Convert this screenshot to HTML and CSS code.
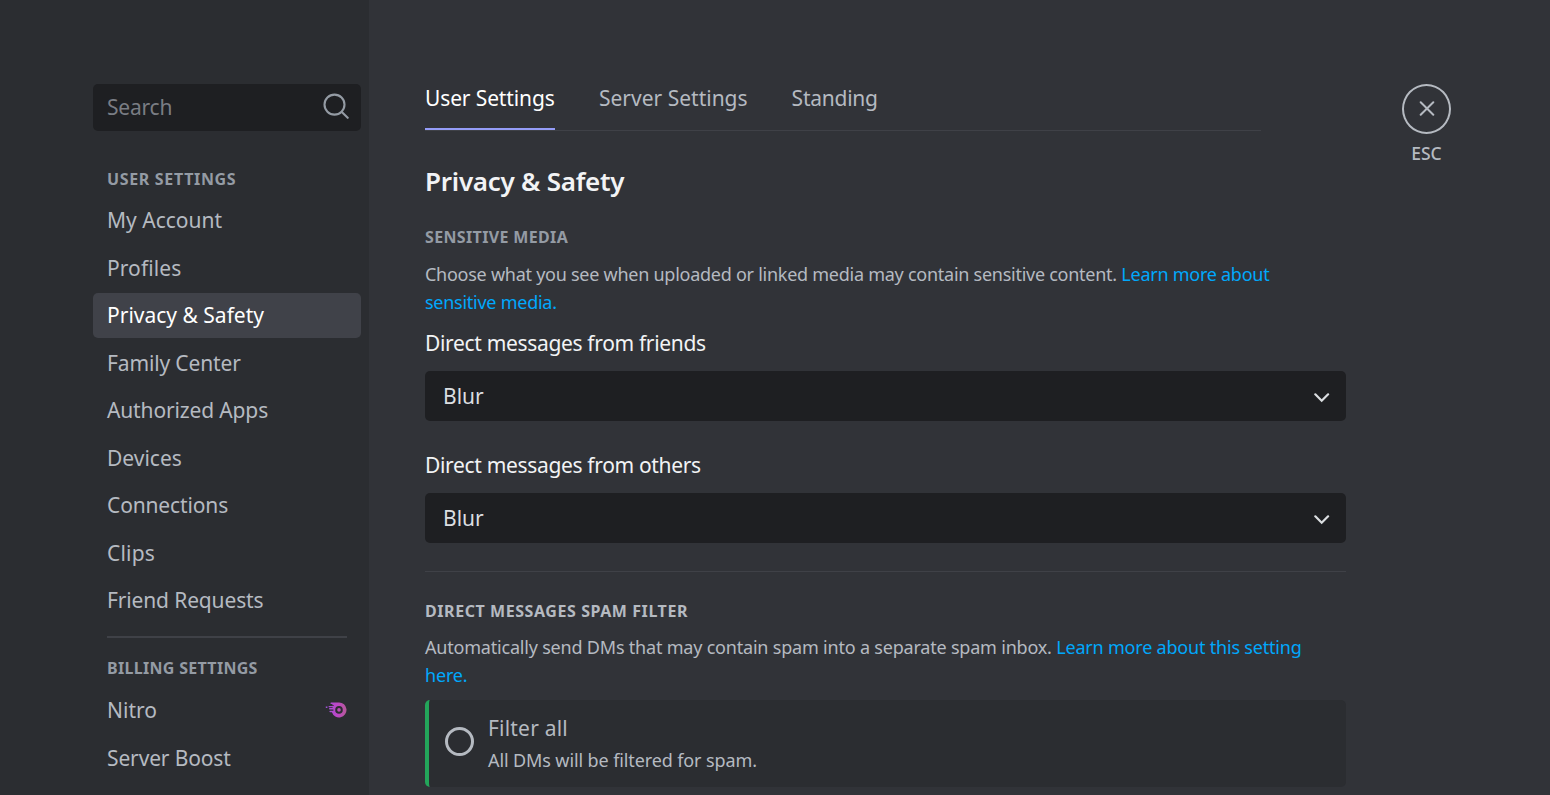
FILE: index.html
```html
<!DOCTYPE html>
<html lang="en">
<head>
<meta charset="utf-8">
<title>Privacy &amp; Safety</title>
<link rel="stylesheet" href="styles.css">
</head>
<body>
<div class="app">
  <nav class="sidebar">
    <div class="search">
      <span class="search-text">Search</span>
      <svg class="search-icon" width="26" height="26" viewBox="0 0 26 26" fill="none" stroke="#949ba4" stroke-width="2.1" stroke-linecap="round"><circle cx="11.5" cy="11.6" r="10"/><path d="M18.8 18.9L24.7 24.8"/></svg>
    </div>
    <h2 class="nav-heading nh-user">User Settings</h2>
    <ul class="nav-list">
      <li class="item"><span>My Account</span></li>
      <li class="item"><span class="i-profiles">Profiles</span></li>
      <li class="item active"><span>Privacy &amp; Safety</span></li>
      <li class="item"><span class="tight">Family Center</span></li>
      <li class="item"><span class="tight">Authorized Apps</span></li>
      <li class="item"><span>Devices</span></li>
      <li class="item"><span class="tight">Connections</span></li>
      <li class="item"><span class="i-clips">Clips</span></li>
      <li class="item"><span class="tight">Friend Requests</span></li>
    </ul>
    <hr class="nav-rule">
    <h2 class="nav-heading nh-billing">Billing Settings</h2>
    <ul class="nav-list">
      <li class="item"><span>Nitro</span>
        <svg class="nitro" width="22" height="16" viewBox="0 0 22 16"><defs><linearGradient id="ng" x1="0" y1="0" x2="1" y2="0"><stop offset="0" stop-color="#9c52d6"/><stop offset=".55" stop-color="#bd46c8"/><stop offset="1" stop-color="#b55a96"/></linearGradient></defs><path fill="url(#ng)" fill-rule="evenodd" d="M6.2.4H14A7.5 7.5 0 1 1 6.9 10.3H5.2Q4.4 10.2 4.4 9.5T5.2 8.7H8.4V7.6H4.8Q4 7.5 4 6.8T4.8 6H7.6V5.3H4.2Q3.5 5.2 3.5 4.6T4.2 3.9H8.8V3.2H7.4V2H6.2Q5.4 1.9 5.4 1.2T6.2.4ZM14 4.1a3.8 3.8 0 1 0 0 7.6a3.8 3.8 0 1 0 0-7.6ZM.8 4.4H2.4V6H.8Z"/><circle cx="14" cy="7.9" r="1.8" fill="#bd4cb9"/></svg>
      </li>
      <li class="item"><span class="tight">Server Boost</span></li>
    </ul>
  </nav>
  <main class="content">
    <div class="tabs">
      <div class="tab selected">User Settings</div>
      <div class="tab">Server Settings</div>
      <div class="tab t-standing">Standing</div>
    </div>
    <h1 class="title">Privacy &amp; Safety</h1>
    <h2 class="section-heading muted">Sensitive Media</h2>
    <p class="desc d-media">Choose what you see when uploaded or linked media may contain sensitive content. <a>Learn more about<br>sensitive media.</a></p>
    <h3 class="label l-friends">Direct messages from friends</h3>
    <div class="select"><span>Blur</span><svg width="16" height="10" viewBox="0 0 16 10" fill="none" stroke="#dbdee1" stroke-width="2.2" stroke-linecap="round"><path d="M1.3 1.3L7.7 7.8L14.1 1.3"/></svg></div>
    <h3 class="label l-others">Direct messages from others</h3>
    <div class="select"><span>Blur</span><svg width="16" height="10" viewBox="0 0 16 10" fill="none" stroke="#dbdee1" stroke-width="2.2" stroke-linecap="round"><path d="M1.3 1.3L7.7 7.8L14.1 1.3"/></svg></div>
    <hr class="rule">
    <h2 class="section-heading spam">Direct Messages Spam Filter</h2>
    <p class="desc d-spam">Automatically send DMs that may contain spam into a separate spam inbox. <a>Learn more about this setting<br>here.</a></p>
    <div class="option">
      <span class="radio"></span>
      <div class="option-text">
        <div class="option-title">Filter all</div>
        <div class="option-desc">All DMs will be filtered for spam.</div>
      </div>
    </div>
  </main>
  <aside class="close">
    <div class="close-ring"><svg width="16" height="16" viewBox="0 0 16 16" stroke="#b5bac1" stroke-width="2" stroke-linecap="round"><path d="M1.7 1.2L14.3 13.8M14.3 1.2L1.7 13.8"/></svg></div>
    <div class="esc">ESC</div>
  </aside>
</div>
</body>
</html>
```
FILE: styles.css
```css
* { box-sizing: border-box; }
body { margin: 0; background: #313338; font-family: "Noto Sans", "Open Sans", sans-serif; color: #b5bac1; }
h1, h2, h3, p, ul { margin: 0; padding: 0; font-weight: 400; }
ul { list-style: none; }
hr { border: 0; margin: 0; }
.app { display: flex; width: 1550px; height: 795px; overflow: hidden; white-space: nowrap; }
.sidebar { width: 369px; flex: none; padding: 84px 8px 0 93px; background: #2b2d31; }
.search { display: flex; align-items: center; justify-content: space-between; height: 47px; padding: 0 12px 0 14px; border-radius: 5px; background: #1e1f22; }
.search-text { margin-top: -1px; font-size: 21px; color: #7a7d84; letter-spacing: -.2px; }
.search-icon { margin-top: -3px; }
.nav-heading { height: 22px; margin-left: 14px; font-size: 16px; line-height: 22px; font-weight: 700; text-transform: uppercase; color: #949ba4; }
.nh-user { margin-top: 37px; margin-bottom: 7.5px; letter-spacing: .66px; }
.nh-billing { margin-top: 19px; margin-bottom: 9px; letter-spacing: .3px; }
.nav-list { display: flex; flex-direction: column; gap: 2.5px; }
.item { display: flex; align-items: center; justify-content: space-between; height: 45px; padding: 0 14px; border-radius: 5px; font-size: 21px; line-height: 28px; }
.item span { margin-top: -1px; }
.item:nth-child(even) span { margin-top: 0; }
.tight { letter-spacing: -.14px; }
.i-profiles { letter-spacing: .08px; }
.i-clips { letter-spacing: .2px; }
.item.active { background: #404249; color: #fff; }
.nav-rule { height: 2px; margin: 13px 14px 0; background: #3f4147; }
.content { width: 921px; flex: none; margin-left: 56px; padding-top: 84px; }
.tabs { display: flex; gap: 44px; width: 836px; height: 47px; border-bottom: 1px solid #3f4147; }
.tab { height: 46px; font-size: 21px; line-height: 29px; }
.tab.selected { width: 130px; color: #fff; border-bottom: 2px solid #949cf7; letter-spacing: -.13px; }
.t-standing { letter-spacing: -.25px; }
.title { height: 34px; margin-top: 33px; font-size: 26px; line-height: 34px; font-weight: 600; letter-spacing: -.25px; color: #f2f3f5; }
.section-heading { height: 22px; font-size: 16px; line-height: 22px; font-weight: 700; text-transform: uppercase; letter-spacing: .35px; }
.muted { margin-top: 28px; color: #949ba4; }
.desc { font-size: 18px; line-height: 28px; }
.d-media { margin-top: 12px; letter-spacing: -.26px; }
.desc a { color: #00a8fc; }
.label { height: 28px; font-size: 21px; line-height: 28px; letter-spacing: -.33px; color: #f2f3f5; }
.l-friends { margin-top: 13px; }
.l-others { margin-top: 30px; }
.select { display: flex; align-items: center; justify-content: space-between; height: 50px; margin-top: 14px; padding: 0 16px 0 18px; border-radius: 5px; background: #1e1f22; color: #dbdee1; font-size: 21px; }
.select svg { margin-top: 3px; }
.rule { height: 1px; margin-top: 28px; background: #3f4147; }
.spam { margin-top: 28px; letter-spacing: .57px; }
.d-spam { margin-top: 11px; letter-spacing: -.2px; }
.option { display: flex; align-items: center; height: 87px; margin-top: 11px; padding-left: 16px; border-left: 4px solid #23a55a; border-radius: 5px; background: #2b2d31; }
.radio { width: 29px; height: 29px; margin-top: -4px; border: 3px solid #b5bac1; border-radius: 50%; }
.option-text { margin-left: 14px; }
.option-title { font-size: 21px; line-height: 32px; letter-spacing: .2px; }
.option-desc { font-size: 18px; line-height: 32px; letter-spacing: -.11px; }
.close { width: 50px; flex: none; margin: 84px 0 0 56px; text-align: center; }
.close-ring { display: flex; align-items: center; justify-content: center; height: 50px; width: 49px; border: 2px solid #b5bac1; border-radius: 50%; }
.esc { width: 49px; margin-top: 8px; font-size: 17.5px; line-height: 22px; font-weight: 500; }
```
